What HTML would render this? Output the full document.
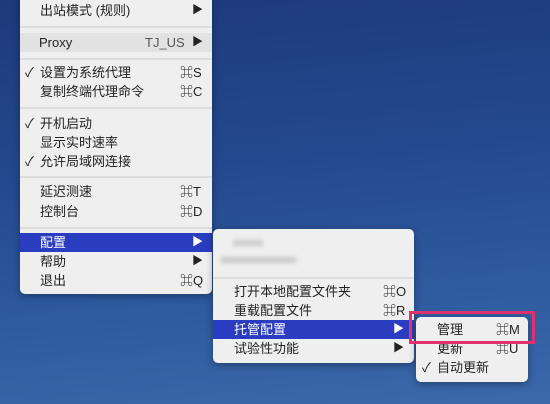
<!DOCTYPE html>
<html><head><meta charset="utf-8"><style>
*{margin:0;padding:0;box-sizing:border-box}
body{width:550px;height:404px;overflow:hidden;position:relative;font-family:"Liberation Sans","Noto Sans CJK SC",sans-serif;font-size:13px;color:#222;
background:linear-gradient(175deg,#1d3a7a 0%,#24488f 40%,#2f5ca0 75%,#3b69ab 100%)}
.m{position:absolute;background:#efefef;border-radius:5px;box-shadow:0 2px 8px rgba(0,0,0,.35)}
.r{position:absolute;left:0;right:0;height:19px;line-height:19px}
.r .l{position:absolute}
.r .k{position:absolute}
.r .c{position:absolute}
.s{position:absolute;left:0;right:0;height:2px;background:#dcdcdc}
.hl{background:#2a3cc0;color:#fff}
.g{background:#e2e2e2}
.a{font-size:11px}
</style></head><body>
<div class="m" style="left:20px;top:-6px;width:192px;height:300px">
 <div class="r" style="top:7px"><span class="l" style="left:20px">出站模式 (规则)</span><span class="c a" style="left:172px">▶</span></div>
 <div class="s" style="top:32px"></div>
 <div class="r g" style="top:39px"><span class="l" style="left:19px">Proxy</span><span class="k" style="left:125px;color:#555">TJ_US</span><span class="c a" style="left:172px">▶</span></div>
 <div class="s" style="top:64px"></div>
 <div class="r" style="top:69px"><span class="c" style="left:5px">✓</span><span class="l" style="left:20px">设置为系统代理</span><span class="k" style="left:160px">⌘S</span></div>
 <div class="r" style="top:88px"><span class="l" style="left:20px">复制终端代理命令</span><span class="k" style="left:160px">⌘C</span></div>
 <div class="s" style="top:113px"></div>
 <div class="r" style="top:120px"><span class="c" style="left:5px">✓</span><span class="l" style="left:20px">开机启动</span></div>
 <div class="r" style="top:139px"><span class="l" style="left:20px">显示实时速率</span></div>
 <div class="r" style="top:158px"><span class="c" style="left:5px">✓</span><span class="l" style="left:20px">允许局域网连接</span></div>
 <div class="s" style="top:182px"></div>
 <div class="r" style="top:188px"><span class="l" style="left:20px">延迟测速</span><span class="k" style="left:160px">⌘T</span></div>
 <div class="r" style="top:208px"><span class="l" style="left:20px">控制台</span><span class="k" style="left:160px">⌘D</span></div>
 <div class="s" style="top:233px"></div>
 <div class="r hl" style="top:239px"><span class="l" style="left:20px">配置</span><span class="c a" style="left:172px">▶</span></div>
 <div class="r" style="top:258px"><span class="l" style="left:20px">帮助</span><span class="c a" style="left:172px">▶</span></div>
 <div class="r" style="top:277px"><span class="l" style="left:20px">退出</span><span class="k" style="left:160px">⌘Q</span></div>
</div>
<div class="m" style="left:213px;top:229px;width:201px;height:134px">
 <div style="position:absolute;left:20px;top:11px;width:30px;height:6px;background:#ccc;filter:blur(2px)"></div>
 <div style="position:absolute;left:8px;top:28px;width:75px;height:6px;background:#c8c8c8;filter:blur(2px)"></div>
 <div class="s" style="top:48px"></div>
 <div class="r" style="top:53px"><span class="l" style="left:21px">打开本地配置文件夹</span><span class="k" style="left:170px">⌘O</span></div>
 <div class="r" style="top:72px"><span class="l" style="left:21px">重载配置文件</span><span class="k" style="left:170px">⌘R</span></div>
 <div class="r hl" style="top:91px"><span class="l" style="left:21px">托管配置</span><span class="c a" style="left:180px">▶</span></div>
 <div class="r" style="top:110px"><span class="l" style="left:21px">试验性功能</span><span class="c a" style="left:180px">▶</span></div>
</div>
<div class="m" style="left:416px;top:317px;width:112px;height:65px">
 <div class="r" style="top:3px"><span class="l" style="left:21px">管理</span><span class="k" style="left:80px">⌘M</span></div>
 <div class="r" style="top:22px"><span class="l" style="left:21px">更新</span><span class="k" style="left:80px">⌘U</span></div>
 <div class="r" style="top:41px"><span class="c" style="left:6px">✓</span><span class="l" style="left:21px">自动更新</span></div>
</div>
<div style="position:absolute;left:409px;top:311px;width:126px;height:33px;border:3px solid #e0306e"></div>
</body></html>
